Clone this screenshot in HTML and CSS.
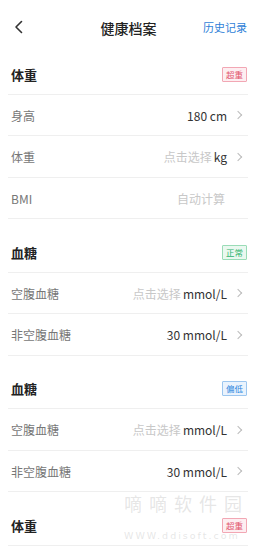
FILE: index.html
```html
<!DOCTYPE html>
<html lang="zh">
<head>
<meta charset="utf-8">
<title>健康档案</title>
<link rel="stylesheet" href="styles.css">
</head>
<body>
<div class="page">
  <header class="nav">
    <svg class="back" width="10" height="14" viewBox="0 0 10 14"><path d="M7.5 1.5 L2 7 L7.5 12.5" fill="none" stroke="#333" stroke-width="1.6" stroke-linecap="round" stroke-linejoin="round"/></svg>
    <div class="title">健康档案</div>
    <div class="history">历史记录</div>
  </header>

  <section class="group">
    <div class="ghead"><span>体重</span><span class="badge red">超重</span></div>
    <div class="row"><span class="label">身高</span><span class="val">180 cm<i class="chev"></i></span></div>
    <div class="row"><span class="label">体重</span><span class="val"><em>点击选择</em> kg<i class="chev"></i></span></div>
    <div class="row"><span class="label">BMI</span><span class="val"><em>自动计算</em><i class="chev none"></i></span></div>
  </section>

  <section class="group">
    <div class="ghead"><span>血糖</span><span class="badge green">正常</span></div>
    <div class="row"><span class="label">空腹血糖</span><span class="val"><em>点击选择</em> mmol/L<i class="chev"></i></span></div>
    <div class="row"><span class="label">非空腹血糖</span><span class="val">30 mmol/L<i class="chev"></i></span></div>
  </section>

  <section class="group">
    <div class="ghead"><span>血糖</span><span class="badge blue">偏低</span></div>
    <div class="row"><span class="label">空腹血糖</span><span class="val"><em>点击选择</em> mmol/L<i class="chev"></i></span></div>
    <div class="row"><span class="label">非空腹血糖</span><span class="val">30 mmol/L<i class="chev"></i></span></div>
  </section>

  <section class="group">
    <div class="ghead"><span>体重</span><span class="badge red">超重</span></div>
  </section>

  <div class="watermark">
    <div class="wm1">嘀嘀软件园</div>
    <div class="wm2">WWW.ddisoft.com</div>
  </div>
</div>
</body>
</html>
```

FILE: styles.css
```css
* { box-sizing: border-box; margin: 0; padding: 0; }
html, body { background: #fff; }
body {
  font-family: "Noto Sans CJK SC", "Noto Sans", "Liberation Sans", sans-serif;
  color: #333;
  overflow: hidden;
}
.page {
  position: relative;
  width: 257px;
  height: 550px;
  overflow: hidden;
}
.nav {
  height: 41px;
  display: flex;
  align-items: center;
  justify-content: space-between;
  padding: 13px 10px 0 14px;
  position: relative;
}
.back { display: block; }
.title {
  position: absolute;
  left: 0; right: 0;
  top: 19px;
  text-align: center;
  font-size: 14px;
  font-weight: 500;
  color: #222;
  line-height: 18px;
}
.history {
  font-size: 11px;
  color: #2f7fd8;
  line-height: 16px;
}
.group {
  margin: 0 9px 0 8px;
  padding-top: 14px;
}
.ghead {
  height: 39.5px;
  border-bottom: 1px solid #efefef;
  display: flex;
  align-items: center;
  justify-content: space-between;
  padding: 0 1px 0 3px;
  font-size: 13px;
  font-weight: 700;
  color: #222;
}
.badge {
  font-size: 8.5px;
  font-weight: 400;
  line-height: 11px;
  padding: 1px 3px;
  border: 1px solid;
  border-radius: 1px;
}
.badge.red { color: #e2566e; border-color: #f2a7b4; background: #fdeef1; }
.badge.green { color: #2fb36d; border-color: #9adcb7; background: #eaf8f0; }
.badge.blue { color: #2e86de; border-color: #9cc6ef; background: #eaf3fd; }
.row {
  height: 41.5px;
  border-bottom: 1px solid #efefef;
  display: flex;
  align-items: center;
  justify-content: space-between;
  padding: 1px 4px 0 3px;
  font-size: 12px;
}
.label { color: #777; }
.val {
  display: flex;
  align-items: center;
  color: #333;
}
.val em {
  font-style: normal;
  color: #c8c8c8;
  margin-right: 2px;
}
.chev {
  display: inline-block;
  width: 6px;
  height: 6px;
  border-top: 1.2px solid #bbb;
  border-right: 1.2px solid #bbb;
  transform: rotate(45deg);
  margin-left: 8px;
  margin-right: 3px;
}
.chev.none { visibility: hidden; }
.watermark {
  position: absolute;
  left: 124px;
  top: 492px;
  width: 130px;
  color: rgba(200, 200, 200, 0.45);
  pointer-events: none;
  white-space: nowrap;
}
.wm1 {
  font-size: 18px;
  letter-spacing: 7px;
  line-height: 22px;
}
.wm2 {
  font-family: "DejaVu Sans", sans-serif;
  font-size: 9.5px;
  letter-spacing: 2px;
  line-height: 12px;
  margin-top: 16px;
}
```
